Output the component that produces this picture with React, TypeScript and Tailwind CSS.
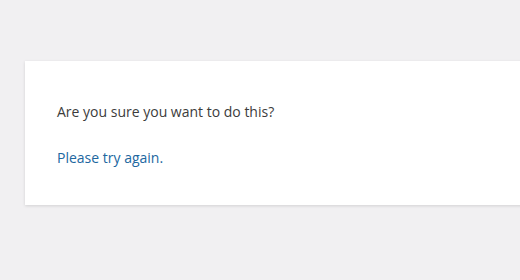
export default function App() {
  return (
    <div className="h-[280px] w-[520px] overflow-hidden bg-[#f1f0f2] pt-[61px] pl-[25px] font-['Open_Sans',sans-serif] text-[14px] leading-[1.5] text-[#3c3c3c]">
      <div className="w-[700px] bg-white px-8 pt-[40px] pb-[37px] shadow-[0_1px_3px_rgba(0,0,0,0.13)]">
        <p>Are you sure you want to do this?</p>
        <p className="mt-[25px]">
          <a href="#" className="text-[#21679f]">
            Please try again.
          </a>
        </p>
      </div>
    </div>
  );
}
